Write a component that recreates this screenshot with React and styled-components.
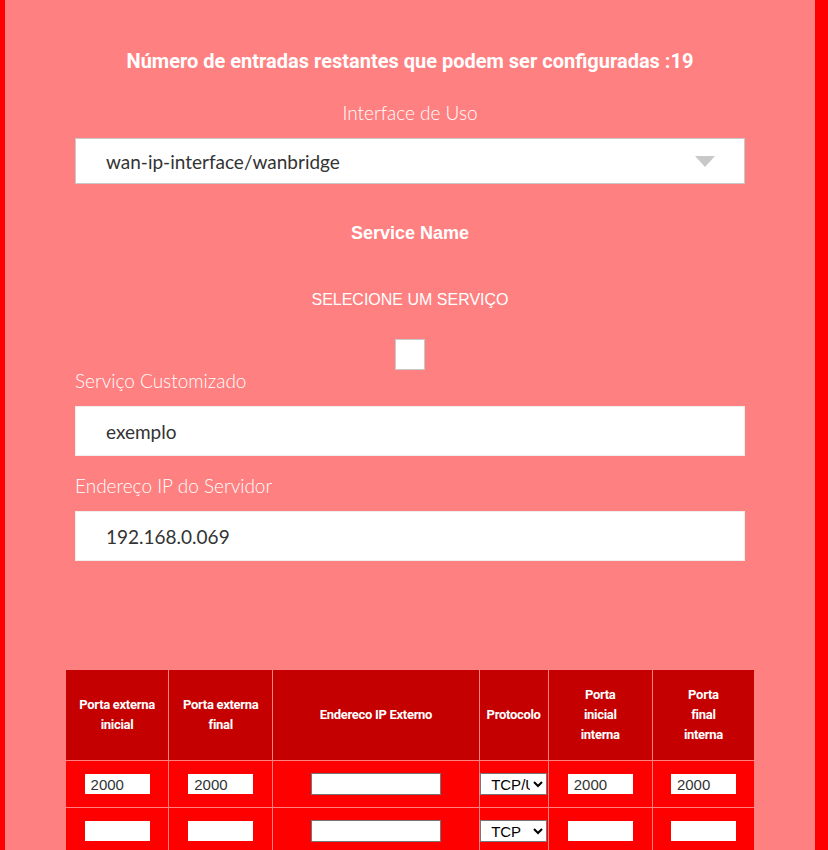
import styled, { createGlobalStyle } from "styled-components";

const Global = createGlobalStyle`
  html, body {
    margin: 0;
    padding: 0;
    background: #ff0000;
  }
`;

export default function App() {
  const rows = [
    { ini: "2000", fim: "2000", ip: "", proto: "TCP/UDP", iini: "2000", ifim: "2000" },
    { ini: "", fim: "", ip: "", proto: "TCP", iini: "", ifim: "" },
  ];

  return (
    <>
      <Global />
      <Panel>
        <Title>Número de entradas restantes que podem ser configuradas :19</Title>
        <Form>
          <Label center>Interface de Uso</Label>
          <SelectBox>
            <span>wan-ip-interface/wanbridge</span>
            <Arrow />
          </SelectBox>
          <SubTitle>Service Name</SubTitle>
          <Hint>SELECIONE UM SERVIÇO</Hint>
          <Check />
          <Label>Serviço Customizado</Label>
          <TextBox defaultValue="exemplo" />
          <Label>Endereço IP do Servidor</Label>
          <TextBox defaultValue="192.168.0.069" />
        </Form>
        <Table>
          <thead>
            <tr>
              <Th w={102}>Porta externa<br />inicial</Th>
              <Th w={103}>Porta externa<br />final</Th>
              <Th w={205}>Endereco IP Externo</Th>
              <Th w={68}>Protocolo</Th>
              <Th w={103}>Porta<br />inicial<br />interna</Th>
              <Th w={101}>Porta<br />final<br />interna</Th>
            </tr>
          </thead>
          <tbody>
            {rows.map((r, i) => (
              <tr key={i}>
                <Td><Port defaultValue={r.ini} /></Td>
                <Td><Port defaultValue={r.fim} /></Td>
                <Td><IpInput defaultValue={r.ip} /></Td>
                <Td>
                  <Proto defaultValue={r.proto}>
                    <option>TCP/UDP</option>
                    <option>TCP</option>
                    <option>UDP</option>
                  </Proto>
                </Td>
                <Td><Port defaultValue={r.iini} /></Td>
                <Td><Port defaultValue={r.ifim} /></Td>
              </tr>
            ))}
          </tbody>
        </Table>
      </Panel>
    </>
  );
}

const Panel = styled.div`
  margin-left: 5px;
  width: 810px;
  min-height: 850px;
  background: #ff8080;
  padding-top: 48px;
  box-sizing: border-box;
`;

const Title = styled.h2`
  margin: 0;
  text-align: center;
  color: #fff;
  font-family: Roboto, sans-serif;
  font-weight: 700;
  font-size: 20px;
  line-height: 26px;
`;

const Form = styled.div`
  padding: 0 70px;
  display: flex;
  flex-direction: column;
  margin-top: 27px;
`;

const Label = styled.div`
  color: #fff;
  font-family: Lato, sans-serif;
  font-weight: 300;
  font-size: 19px;
  line-height: 24px;
  text-align: ${(p) => (p.center ? "center" : "left")};
  margin-bottom: 13px;
`;

const SelectBox = styled.div`
  height: 46px;
  background: #fff;
  border: 1px solid #c8c8c8;
  box-sizing: border-box;
  display: flex;
  align-items: center;
  justify-content: space-between;
  padding: 0 29px 0 30px;
  font-family: Lato, sans-serif;
  font-size: 19px;
  color: #333;
`;

const Arrow = styled.span`
  width: 0;
  height: 0;
  border-left: 10px solid transparent;
  border-right: 10px solid transparent;
  border-top: 11px solid #c8c8c8;
`;

const SubTitle = styled.div`
  margin-top: 38px;
  text-align: center;
  color: #fff;
  font-family: "Liberation Sans", Arial, sans-serif;
  font-weight: 700;
  font-size: 18px;
  line-height: 22px;
`;

const Hint = styled.div`
  margin-top: 46px;
  text-align: center;
  color: #fff;
  font-family: "Liberation Sans", Arial, sans-serif;
  font-size: 16px;
  line-height: 20px;
`;

const Check = styled.div`
  align-self: center;
  width: 30px;
  height: 31px;
  margin-top: 29px;
  margin-bottom: -1px;
  background: #fff;
  border: 1px solid #c8c8c8;
  box-sizing: border-box;
`;

const TextBox = styled.input`
  height: 50px;
  background: #fff;
  border: 1px solid #eee;
  box-sizing: border-box;
  padding: 0 30px;
  font-family: Lato, sans-serif;
  font-size: 19px;
  color: #333;
  margin-bottom: 18px;
  outline: none;
`;

const Table = styled.table`
  margin: 91px 0 0 61px;
  border-collapse: collapse;
  table-layout: fixed;
  width: 688px;
  tr:first-child th { border-top: none; }
  th:first-child, td:first-child { border-left: none; }
  th:last-child, td:last-child { border-right: none; }
`;

const Th = styled.th`
  width: ${(p) => p.w}px;
  height: 90px;
  background: #c40000;
  color: #fff;
  font-family: Roboto, sans-serif;
  font-weight: 700;
  font-size: 13px;
  letter-spacing: -0.3px;
  line-height: 20px;
  border: 1px solid #ff8080;
  padding: 0;
`;

const Td = styled.td`
  height: 46px;
  background: #ff0000;
  border: 1px solid #ff8080;
  text-align: center;
  padding: 0;
`;

const Port = styled.input`
  width: 65px;
  height: 20px;
  border: none;
  box-sizing: border-box;
  padding: 0 5px 0 6px;
  font-family: "Liberation Sans", Arial, sans-serif;
  font-size: 15px;
  color: #333;
  outline: none;
`;

const IpInput = styled.input`
  width: 130px;
  height: 22px;
  box-sizing: border-box;
  border: 1px solid #767676;
  background: #fff;
  outline: none;
`;

const Proto = styled.select`
  width: 67px;
  height: 22px;
  box-sizing: border-box;
  border: 1px solid #767676;
  background: #fff;
  padding-left: 6px;
  font-family: "Liberation Sans", Arial, sans-serif;
  font-size: 15px;
  color: #000;
`;
